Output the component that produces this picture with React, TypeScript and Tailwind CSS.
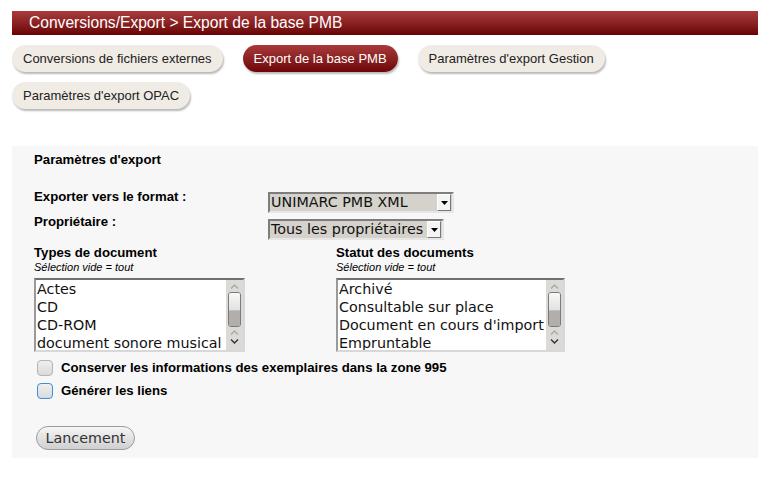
import React from 'react';

const sans = { fontFamily: '"Liberation Sans", Arial, sans-serif' };
const deja = { fontFamily: '"DejaVu Sans", Verdana, sans-serif' };

function Tab({ label, active }: { label: string; active?: boolean }) {
  return (
    <div
      className={
        'h-[27px] px-[11px] flex items-center rounded-full text-[13px] shadow-[1px_2px_2px_rgba(0,0,0,0.28)] ' +
        (active
          ? 'bg-gradient-to-b from-[#a9393b] to-[#6e0407] text-white'
          : 'bg-[#f0ebe4] text-[#222]')
      }
    >
      {label}
    </div>
  );
}

function Select({ value, width }: { value: string; width: string }) {
  return (
    <div
      className={`${width} h-[21px] flex items-center bg-[#d5d1cb] border-2 border-t-[#7d7d7d] border-l-[#7d7d7d] border-r-[#e6e6e6] border-b-[#e6e6e6] overflow-hidden`}
    >
      <span className="flex-1 min-w-0 pl-[1px] text-[14.3px] leading-none text-[#111] whitespace-nowrap" style={deja}>
        {value}
      </span>
      <span className="shrink-0 w-[14px] h-[17px] mr-[1px] flex items-center justify-center bg-[#f4f4f4] border border-t-[#fff] border-l-[#fff] border-r-[#777] border-b-[#777]">
        <svg width="7" height="4" viewBox="0 0 7 4">
          <path d="M0 0h7L3.5 4z" fill="#000" />
        </svg>
      </span>
    </div>
  );
}

function Scrollbar() {
  return (
    <div className="shrink-0 w-[17px] self-stretch bg-[#dcdad6] flex flex-col items-center">
      <svg className="mt-[3px]" width="11" height="7" viewBox="0 0 11 7">
        <path d="M2 5.5L5.5 2L9 5.5" stroke="#a8a8a8" strokeWidth="1.3" fill="none" />
      </svg>
      <div className="mt-[2px] w-[13px] h-[35px] rounded-[3px] border border-[#7c7a78] overflow-hidden flex flex-col">
        <div className="h-[18px] bg-gradient-to-b from-[#f8f8f8] to-[#e2e2e2] border-b border-[#c0c0c0]" />
        <div className="flex-1 bg-[#b2aeaa]" />
      </div>
      <svg className="mt-[2px]" width="11" height="7" viewBox="0 0 11 7">
        <path d="M2 5.5L5.5 2L9 5.5" stroke="#a8a8a8" strokeWidth="1.3" fill="none" />
      </svg>
      <svg className="mt-[2px]" width="11" height="7" viewBox="0 0 11 7">
        <path d="M2 1.5L5.5 5L9 1.5" stroke="#333" strokeWidth="1.4" fill="none" />
      </svg>
    </div>
  );
}

function ListBox({ items, width }: { items: string[]; width: string }) {
  return (
    <div
      className={`${width} h-[74px] flex bg-white border-2 border-t-[#707070] border-l-[#9a9a9a] border-r-[#d8d8d8] border-b-[#d8d8d8] overflow-hidden`}
    >
      <div className="flex-1 min-w-0 pl-[1px]">
        {items.map((it) => (
          <div key={it} className="h-[18px] leading-[18px] text-[14.3px] text-[#111] whitespace-nowrap" style={deja}>
            {it}
          </div>
        ))}
      </div>
      <Scrollbar />
    </div>
  );
}

function Check({ label, focus }: { label: string; focus?: boolean }) {
  return (
    <div className="h-[20px] flex items-center">
      <span
        className={
          'ml-[3px] w-[16px] h-[16px] rounded-[4px] bg-gradient-to-b from-[#efefef] to-[#dadada] ' +
          (focus ? 'border-[1.5px] border-[#3b8fd6]' : 'border border-[#b4b4b4]')
        }
      />
      <span className="ml-[8px] text-[13.2px] font-bold text-black">{label}</span>
    </div>
  );
}

export default function App() {
  return (
    <div className="min-h-screen bg-white pt-[11px] px-[12px] w-[770px]" style={sans}>
      <div className="h-[24px] pl-[17px] flex items-center bg-gradient-to-b from-[#ab3b3d] to-[#6a0104] text-white text-[15.6px]">
        Conversions/Export &gt; Export de la base PMB
      </div>

      <div className="mt-[10px] flex flex-wrap gap-x-[20px] gap-y-[10px]">
        <Tab label="Conversions de fichiers externes" />
        <Tab label="Export de la base PMB" active />
        <Tab label="Paramètres d'export Gestion" />
        <Tab label="Paramètres d'export OPAC" />
      </div>

      <div className="mt-[37px] w-[746px] bg-[#f7f7f7] pl-[22px] pt-[6px] pb-[8px]">
        <div className="text-[13.2px] leading-[16px] font-bold text-black">Paramètres d'export</div>

        <div className="mt-[21px] flex items-start">
          <div className="w-[234px] text-[13.2px] leading-[16px] font-bold text-black">Exporter vers le format :</div>
          <div className="mt-[3px]">
            <Select value="UNIMARC PMB XML" width="w-[186px]" />
          </div>
        </div>
        <div className="mt-[1px] flex items-start">
          <div className="w-[234px] text-[13.2px] leading-[16px] font-bold text-black">Propriétaire :</div>
          <div className="mt-[5px]">
            <Select value="Tous les propriétaires" width="w-[176px]" />
          </div>
        </div>

        <div className="mt-[5px] flex gap-[91px]">
          <div>
            <div className="text-[13.2px] leading-[16px] font-bold text-black">Types de document</div>
            <div className="text-[11px] leading-[13px] italic text-black">Sélection vide = tout</div>
            <div className="mt-[4px]">
              <ListBox width="w-[211px]" items={['Actes', 'CD', 'CD-ROM', 'document sonore musical']} />
            </div>
          </div>
          <div>
            <div className="text-[13.2px] leading-[16px] font-bold text-black">Statut des documents</div>
            <div className="text-[11px] leading-[13px] italic text-black">Sélection vide = tout</div>
            <div className="mt-[4px]">
              <ListBox
                width="w-[229px]"
                items={['Archivé', 'Consultable sur place', "Document en cours d'import", 'Empruntable']}
              />
            </div>
          </div>
        </div>

        <div className="mt-[6px] flex flex-col gap-[3px]">
          <Check label="Conserver les informations des exemplaires dans la zone 995" />
          <Check label="Générer les liens" focus />
        </div>

        <div className="mt-[25px]">
          <button
            className="ml-[2px] w-[99px] h-[24px] rounded-full border border-[#9c9c9c] bg-gradient-to-b from-[#f6f6f6] to-[#cfcfcf] text-[14.3px] text-[#333] leading-none"
            style={deja}
          >
            Lancement
          </button>
        </div>
      </div>
    </div>
  );
}
